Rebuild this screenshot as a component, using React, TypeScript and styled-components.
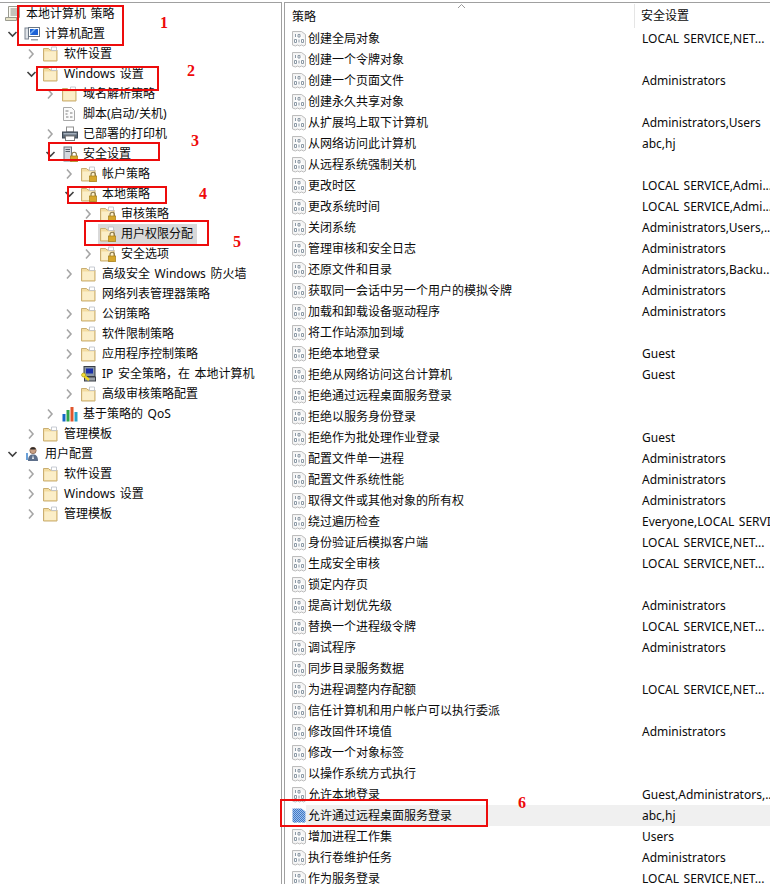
import React from "react";
import styled, { createGlobalStyle } from "styled-components";

const Global = createGlobalStyle`
  html, body { margin: 0; padding: 0; background: #fff; overflow: hidden; }
  body { font-family: "Noto Sans", "Noto Sans CJK SC", sans-serif; font-size: 12px; color: #0a0a0a; word-spacing: 1.5px; }
`;

const Page = styled.div`
  position: relative;
  width: 770px;
  height: 884px;
  overflow: hidden;
  display: flex;
  gap: 2px;
  padding-top: 2px;
  box-sizing: border-box;
`;
const TreePane = styled.div`
  width: 282px;
  flex: none;
  box-sizing: border-box;
  padding-top: 1px;
  border-top: 1px solid #a0a0a0;
  border-right: 1px solid #a0a0a0;
`;
const ListPane = styled.div`
  flex: 1;
  min-width: 0;
  border-top: 1px solid #a0a0a0;
  border-left: 1px solid #a0a0a0;
`;
const TreeRow = styled.div<{ $depth: number }>`
  height: 20px;
  display: flex;
  align-items: center;
  box-sizing: border-box;
  white-space: nowrap;
  padding-left: ${(p) => Math.max(p.$depth - 1, 0) * 19 + 3}px;
`;
const Chevron = styled.svg`
  width: 19px;
  height: 16px;
  flex: none;
`;
const ChevronGap = styled.span`
  width: 19px;
  height: 16px;
  flex: none;
`;
const NodeBand = styled.span<{ $selected?: boolean }>`
  display: flex;
  align-items: center;
  height: 20px;
  padding: 0 4px 0 2px;
  background: ${(p) => (p.$selected ? "#d9d9d9" : "transparent")};
`;
const NodeIcon = styled.span`
  width: 16px;
  height: 16px;
  flex: none;
  display: flex;
`;
const TreeLabel = styled.span`
  margin-left: 5px;
  line-height: 20px;
`;
const ListHeader = styled.div`
  position: relative;
  height: 25px;
  display: flex;
  align-items: center;
`;
const HeadName = styled.div`
  width: 350px;
  flex: none;
  box-sizing: border-box;
  padding-left: 7px;
  height: 24px;
  line-height: 26px;
  border-right: 1px solid #e5e5e5;
`;
const HeadSetting = styled.div`
  padding-left: 6px;
  line-height: 26px;
  white-space: nowrap;
`;
const SortCaret = styled.svg`
  position: absolute;
  left: 172px;
  top: 0;
  width: 9px;
  height: 6px;
`;
const ListRow = styled.div`
  height: 21px;
  display: flex;
  align-items: center;
  white-space: nowrap;
`;
const NameCell = styled.div`
  width: 350px;
  flex: none;
  height: 21px;
  display: flex;
  align-items: center;
  box-sizing: border-box;
  padding-left: 7px;
`;
const PolicyIcon = styled.svg`
  width: 14px;
  height: 17px;
  flex: none;
`;
const NameText = styled.span<{ $active?: boolean }>`
  padding-left: 2px;
  flex: 1;
  height: 21px;
  line-height: 21px;
  background: ${(p) => (p.$active ? "#f0f0f0" : "transparent")};
`;
const SettingCell = styled.div<{ $active?: boolean }>`
  flex: 1;
  height: 21px;
  line-height: 21px;
  padding-left: 7px;
  overflow: hidden;
  background: ${(p) => (p.$active ? "#f0f0f0" : "transparent")};
`;
const Mark = styled.div<{ $x: number; $y: number; $w: number; $h: number }>`
  position: absolute;
  left: ${(p) => p.$x}px;
  top: ${(p) => p.$y}px;
  width: ${(p) => p.$w}px;
  height: ${(p) => p.$h}px;
  box-sizing: border-box;
  border: 2px solid #ed0c0c;
  pointer-events: none;
`;
const MarkNumber = styled.div<{ $x: number; $y: number }>`
  position: absolute;
  left: ${(p) => p.$x}px;
  top: ${(p) => p.$y}px;
  font-family: "Liberation Serif", serif;
  font-size: 16px;
  line-height: 18px;
  font-weight: 700;
  color: #ee0a0a;
`;

const ChevronShape = ({ open }: { open: boolean }) => (
  <Chevron viewBox="0 0 19 16">
    {open ? (
      <path d="M5.5 6l4 4 4-4" fill="none" stroke="#404040" strokeWidth="1.6" />
    ) : (
      <path d="M7 3.5l4 4.5-4 4.5" fill="none" stroke="#a6a6a6" strokeWidth="1.6" />
    )}
  </Chevron>
);

const FolderShape = () => (
  <>
    <path d="M.5 2.500h5L7 4h7v11H.5z" fill="#f3dca0" stroke="#c9ae72" />
    <path d="M1.500 5.500h11.500v8.500H1.500z" fill="#fbeec8" />
    <path d="M8.500 1h5v3.500h-5z" fill="#fff" stroke="#b9bec6" strokeWidth="0.8" />
  </>
);
const LockShape = () => (
  <>
    <path d="M10 10V8.500a2.200 2.200 0 0 1 4.400 0V10" fill="none" stroke="#8b7a4c" strokeWidth="1.100" />
    <rect x="8.500" y="10" width="7.200" height="5.600" fill="#d6a72c" stroke="#a57f1c" strokeWidth="0.700" />
  </>
);
const Icon = ({ kind }: { kind: string }) => {
  const body: Record<string, React.ReactNode> = {
    folder: <FolderShape />,
    lock: (
      <>
        <FolderShape />
        <LockShape />
      </>
    ),
    scroll: (
      <>
        <path d="M3.500 .5h11v11h-11z" fill="#fbfbf4" stroke="#9b9b90" />
        <path d="M.5 11.500h11v3H.5z" fill="#e6e2c6" stroke="#9b9b90" />
        <path d="M5.500 3h7M5.500 5h7M5.500 7h7M5.500 9h7" stroke="#8a8a80" />
      </>
    ),
    computer: (
      <>
        <rect x="1" y="2" width="3.500" height="11" fill="#dfe3e8" stroke="#7c8592" />
        <rect x="4.500" y="1.500" width="11" height="9" fill="#fff" stroke="#6a7683" />
        <rect x="6" y="3" width="8" height="6" fill="#1c62d6" />
        <path d="M6 7l4-4h2L6 9z" fill="#7db6f4" />
        <path d="M7 13h7v1.500H7z" fill="#9ba4ae" />
      </>
    ),
    script: (
      <>
        <path d="M1.500 1.500h8l3 3v10h-11z" fill="#fbfbfb" stroke="#a9a9a9" />
        <path d="M3.500 5h3M8 7h2.500M3.500 8h2M4 11h2.500M8 11h2.500" stroke="#7d7d7d" />
      </>
    ),
    printer: (
      <>
        <rect x="4.500" y="1" width="7" height="5" fill="#fff" stroke="#8f8f8f" />
        <rect x="0.500" y="6" width="15" height="6" fill="#5e6a78" stroke="#3f4954" />
        <rect x="1.500" y="7" width="13" height="1.500" fill="#a5b0bc" />
        <rect x="3.500" y="10" width="9" height="4.500" fill="#fff" stroke="#7a7a7a" />
      </>
    ),
    server: (
      <>
        <rect x="2" y="1" width="7.500" height="14" fill="#d4d8de" stroke="#6f7782" />
        <path d="M3.500 3.500h4.500M3.500 5.500h4.500" stroke="#57606b" />
        <LockShape />
      </>
    ),
    ip: (
      <>
        <rect x="3" y="0.500" width="11" height="10" fill="#8b98a6" stroke="#3a3f46" />
        <rect x="5" y="2.500" width="7" height="5" fill="#1a2fa8" />
        <rect x="3.500" y="11" width="11" height="4" fill="#9a9fa6" stroke="#3a3f46" />
        <path d="M1 8l7 6" stroke="#f0d820" strokeWidth="2.400" />
        <circle cx="2.600" cy="9" r="2" fill="#f4e03a" stroke="#a08f10" strokeWidth="0.600" />
      </>
    ),
    qos: (
      <>
        <rect x="0.500" y="8" width="3" height="7.500" fill="#1668c8" />
        <rect x="4.500" y="4" width="3" height="11.500" fill="#2fa44a" />
        <rect x="8.500" y="1" width="3" height="14.500" fill="#e0552c" />
        <rect x="12.500" y="6" width="3" height="9.500" fill="#26a2c8" />
      </>
    ),
    user: (
      <>
        <circle cx="9" cy="4.500" r="3.200" fill="#caa184" stroke="#6e4f3a" strokeWidth="0.600" />
        <path d="M4 15c0-5 2-6.500 5-6.500s5 1.500 5 6.500z" fill="#5d6f8a" />
        <path d="M6.500 2.500a3 3 0 0 1 5 0v1h-5z" fill="#2e2a28" />
        <path d="M3 7v7" stroke="#6aa0d8" strokeWidth="2" />
        <path d="M9 9l-1 4h2z" fill="#eef3f8" />
      </>
    ),
  };
  return (
    <svg viewBox="0 0 16 16" width="16" height="16">
      {body[kind]}
    </svg>
  );
};

const Policy = ({ active }: { active?: boolean }) => (
  <PolicyIcon viewBox="0 0 14 17">
    <defs>
      <pattern id="dither" width="2" height="2" patternUnits="userSpaceOnUse">
        <rect width="2" height="2" fill="#3f78c8" />
        <rect width="1" height="1" fill="#9fc0ea" />
        <rect x="1" y="1" width="1" height="1" fill="#9fc0ea" />
      </pattern>
    </defs>
    {active ? (
      <path d="M.5 1.500h9l4 3v10.500l-2 1-2-1-2 1-2-1-2 1-3-1z" fill="url(#dither)" />
    ) : (
      <>
        <path d="M.5 1.500h9l4 3v10.500l-2 1-2-1-2 1-2-1-2 1-3-1z" fill="#f3f3f3" stroke="#bdbdbd" />
        <path d="M2.500 3.500h4v4h2v-3h2v3h2v6h-10z" fill="#fcfcfc" />
        <path
          d="M3.500 4v3M6 4.500h2v2.500H6zM2.500 9.500h2v3h-2zM7 9.500v3M9.500 9.500h2v3h-2z"
          fill="none"
          stroke="#8d9aa6"
        />
      </>
    )}
  </PolicyIcon>
);

type Node = { d: number; t: string; i: string; c?: "open" | "closed"; sel?: boolean };
const tree: Node[] = [
  { d: 0, t: "本地计算机 策略", i: "scroll" },
  { d: 1, t: "计算机配置", i: "computer", c: "open" },
  { d: 2, t: "软件设置", i: "folder", c: "closed" },
  { d: 2, t: "Windows 设置", i: "folder", c: "open" },
  { d: 3, t: "域名解析策略", i: "folder", c: "closed" },
  { d: 3, t: "脚本(启动/关机)", i: "script" },
  { d: 3, t: "已部署的打印机", i: "printer", c: "closed" },
  { d: 3, t: "安全设置", i: "server", c: "open" },
  { d: 4, t: "帐户策略", i: "lock", c: "closed" },
  { d: 4, t: "本地策略", i: "lock", c: "open" },
  { d: 5, t: "审核策略", i: "lock", c: "closed" },
  { d: 5, t: "用户权限分配", i: "lock", sel: true },
  { d: 5, t: "安全选项", i: "lock", c: "closed" },
  { d: 4, t: "高级安全 Windows 防火墙", i: "folder", c: "closed" },
  { d: 4, t: "网络列表管理器策略", i: "folder" },
  { d: 4, t: "公钥策略", i: "folder", c: "closed" },
  { d: 4, t: "软件限制策略", i: "folder", c: "closed" },
  { d: 4, t: "应用程序控制策略", i: "folder", c: "closed" },
  { d: 4, t: "IP 安全策略，在 本地计算机", i: "ip", c: "closed" },
  { d: 4, t: "高级审核策略配置", i: "folder", c: "closed" },
  { d: 3, t: "基于策略的 QoS", i: "qos", c: "closed" },
  { d: 2, t: "管理模板", i: "folder", c: "closed" },
  { d: 1, t: "用户配置", i: "user", c: "open" },
  { d: 2, t: "软件设置", i: "folder", c: "closed" },
  { d: 2, t: "Windows 设置", i: "folder", c: "closed" },
  { d: 2, t: "管理模板", i: "folder", c: "closed" },
];

const LS = "LOCAL SERVICE,NET...";
const LA = "LOCAL SERVICE,Admi...";
const AD = "Administrators";
const rows: [string, string][] = [
  ["创建全局对象", LS],
  ["创建一个令牌对象", ""],
  ["创建一个页面文件", AD],
  ["创建永久共享对象", ""],
  ["从扩展坞上取下计算机", "Administrators,Users"],
  ["从网络访问此计算机", "abc,hj"],
  ["从远程系统强制关机", ""],
  ["更改时区", LA],
  ["更改系统时间", LA],
  ["关闭系统", "Administrators,Users,..."],
  ["管理审核和安全日志", AD],
  ["还原文件和目录", "Administrators,Backu..."],
  ["获取同一会话中另一个用户的模拟令牌", AD],
  ["加载和卸载设备驱动程序", AD],
  ["将工作站添加到域", ""],
  ["拒绝本地登录", "Guest"],
  ["拒绝从网络访问这台计算机", "Guest"],
  ["拒绝通过远程桌面服务登录", ""],
  ["拒绝以服务身份登录", ""],
  ["拒绝作为批处理作业登录", "Guest"],
  ["配置文件单一进程", AD],
  ["配置文件系统性能", AD],
  ["取得文件或其他对象的所有权", AD],
  ["绕过遍历检查", "Everyone,LOCAL SERVICE"],
  ["身份验证后模拟客户端", LS],
  ["生成安全审核", LS],
  ["锁定内存页", ""],
  ["提高计划优先级", AD],
  ["替换一个进程级令牌", LS],
  ["调试程序", AD],
  ["同步目录服务数据", ""],
  ["为进程调整内存配额", LS],
  ["信任计算机和用户帐户可以执行委派", ""],
  ["修改固件环境值", AD],
  ["修改一个对象标签", ""],
  ["以操作系统方式执行", ""],
  ["允许本地登录", "Guest,Administrators,..."],
  ["允许通过远程桌面服务登录", "abc,hj"],
  ["增加进程工作集", "Users"],
  ["执行卷维护任务", AD],
  ["作为服务登录", LS],
];

const marks = [
  { x: 17, y: 5, w: 107, h: 41 },
  { x: 36, y: 66, w: 123, h: 25 },
  { x: 48, y: 142, w: 112, h: 19 },
  { x: 67, y: 186, w: 100, h: 18 },
  { x: 84, y: 220, w: 125, h: 26 },
  { x: 280, y: 799, w: 208, h: 28 },
];
const numbers = [
  { x: 160, y: 14, n: "1" },
  { x: 187, y: 62, n: "2" },
  { x: 191, y: 132, n: "3" },
  { x: 199, y: 185, n: "4" },
  { x: 233, y: 233, n: "5" },
  { x: 518, y: 794, n: "6" },
];

export default function App() {
  return (
    <Page>
      <Global />
      <TreePane>
        {tree.map((n, idx) => (
          <TreeRow key={idx} $depth={n.d}>
            {n.d > 0 && (n.c ? <ChevronShape open={n.c === "open"} /> : <ChevronGap />)}
            <NodeBand $selected={n.sel}>
              <NodeIcon>
                <Icon kind={n.i} />
              </NodeIcon>
              <TreeLabel>{n.t}</TreeLabel>
            </NodeBand>
          </TreeRow>
        ))}
      </TreePane>
      <ListPane>
        <ListHeader>
          <SortCaret viewBox="0 0 9 6">
            <path d="M1 5l3.500-3.500L8 5" fill="none" stroke="#9a9a9a" />
          </SortCaret>
          <HeadName>策略</HeadName>
          <HeadSetting>安全设置</HeadSetting>
        </ListHeader>
        {rows.map(([name, value], idx) => {
          const active = idx === 37;
          return (
            <ListRow key={idx}>
              <NameCell>
                <Policy active={active} />
                <NameText $active={active}>{name}</NameText>
              </NameCell>
              <SettingCell $active={active}>{value}</SettingCell>
            </ListRow>
          );
        })}
      </ListPane>
      {marks.map((m, i) => (
        <Mark key={i} $x={m.x} $y={m.y} $w={m.w} $h={m.h} />
      ))}
      {numbers.map((m) => (
        <MarkNumber key={m.n} $x={m.x} $y={m.y}>
          {m.n}
        </MarkNumber>
      ))}
    </Page>
  );
}
